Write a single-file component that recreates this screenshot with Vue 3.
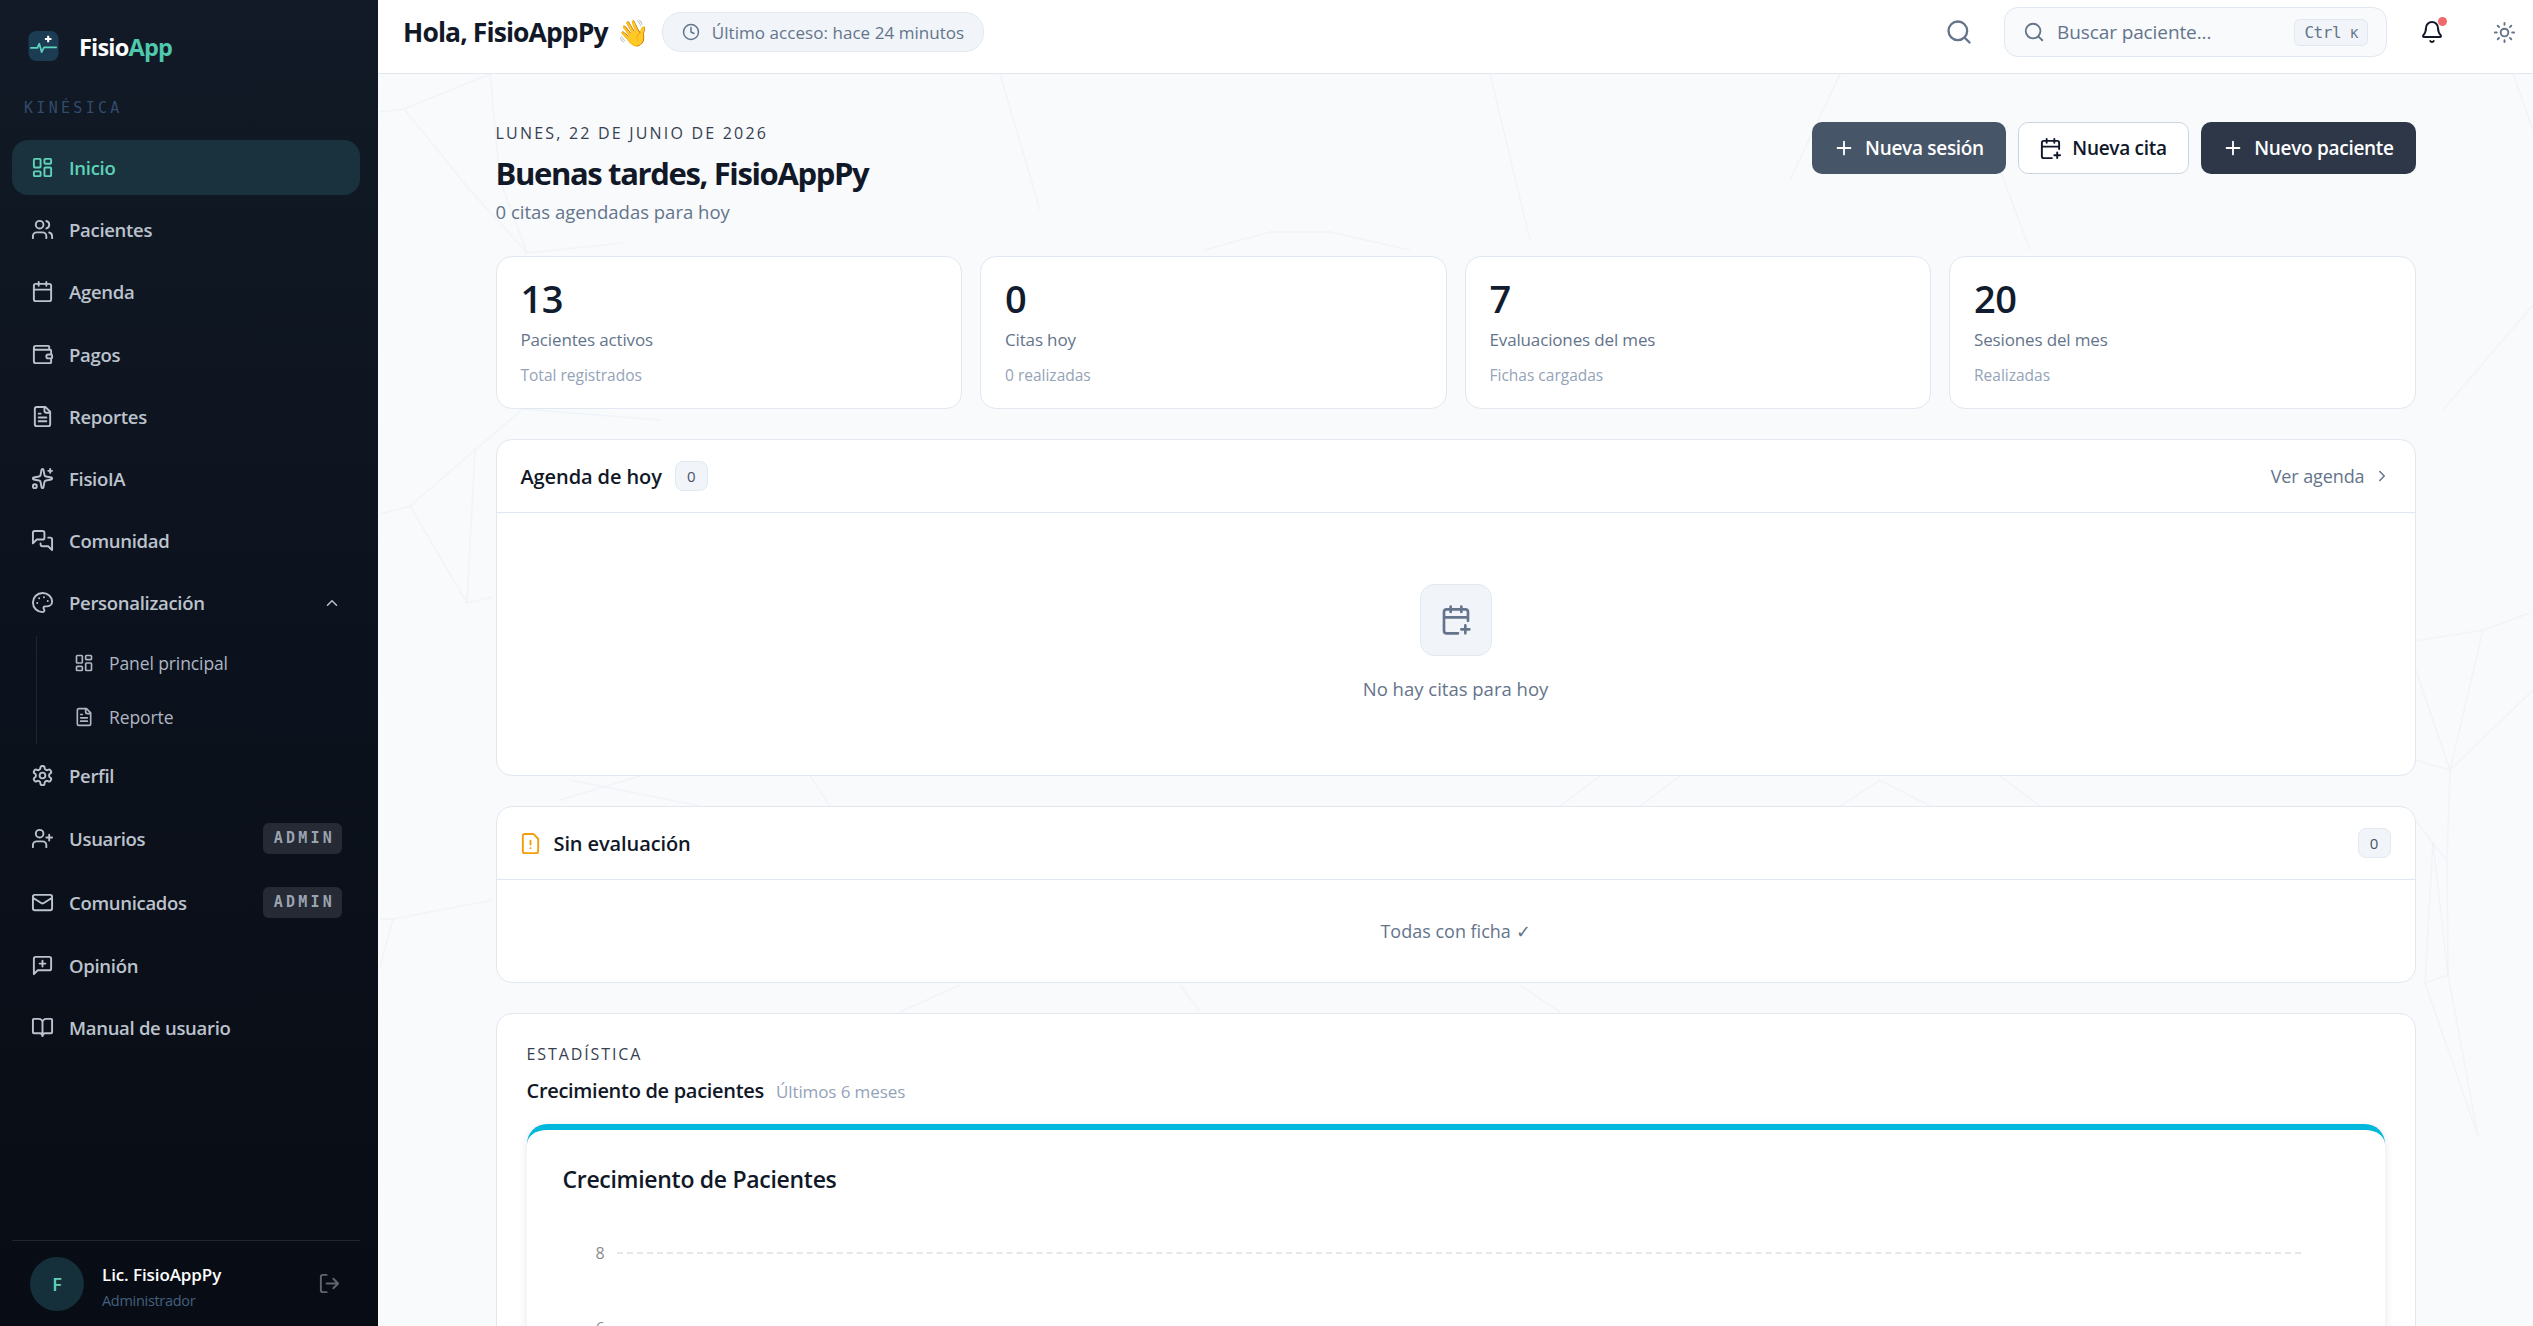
<template>
  <div class="app">
    <aside class="sidebar">
      <div class="brand">
        <svg class="logo" viewBox="0 0 32 32" fill="none">
          <rect width="32" height="32" rx="8" fill="#1b3c52" />
          <path d="M2.500 18h7l2-4.500 2.500 9 2.500-5h13" stroke="#5ed3bd" stroke-width="1.800" stroke-linecap="round" stroke-linejoin="round" />
          <path d="M21 5v7M17.500 8.500h7" stroke="#fff" stroke-width="2.200" />
        </svg>
        <span class="brand-name">Fisio<b>App</b></span>
      </div>
      <div class="section">KINÉSICA</div>

      <nav class="nav">
        <template v-for="item in navItems" :key="item.label">
          <a class="nav-item" :class="{ active: item.active, tall: item.badge }">
            <Icon :name="item.icon" :size="23" />
            <span class="nav-label">{{ item.label }}</span>
            <span v-if="item.badge" class="badge">{{ item.badge }}</span>
            <Icon v-if="item.children" class="chev" name="chevronUp" :size="18" />
          </a>
          <div v-if="item.children" class="subnav">
            <a v-for="sub in item.children" :key="sub.label" class="sub-item">
              <Icon :name="sub.icon" :size="20" />
              <span>{{ sub.label }}</span>
            </a>
          </div>
        </template>
      </nav>

      <div class="user">
        <div class="avatar">F</div>
        <div class="user-info">
          <div class="user-name">Lic. FisioAppPy</div>
          <div class="user-role">Administrador</div>
        </div>
        <Icon class="logout" name="logout" :size="23" />
      </div>
    </aside>

    <div class="main">
      <svg class="mesh" viewBox="378 70 2155 1256" fill="none">
        <polyline v-for="(line, i) in meshLines" :key="i" :points="line" stroke="#e2e8f0" stroke-opacity="0.3" stroke-width="1.500" />
      </svg>

      <header class="topbar">
        <h2 class="hello">Hola, FisioAppPy <span class="wave">👋</span></h2>
        <div class="last-access">
          <Icon name="clock" :size="18" />
          <span>Último acceso: hace 24 minutos</span>
        </div>
        <div class="spacer"></div>
        <Icon class="top-search" name="search" :size="28" />
        <div class="search-box">
          <Icon name="search" :size="22" />
          <span class="search-text">Buscar paciente...</span>
          <span class="kbd">Ctrl <small>K</small></span>
        </div>
        <div class="bell">
          <Icon name="bell" :size="24" />
          <span class="dot"></span>
        </div>
        <Icon class="sun" name="sun" :size="23" />
      </header>

      <main class="content">
        <div class="page-head">
          <div>
            <div class="date">LUNES, 22 DE JUNIO DE 2026</div>
            <h1 class="greeting">Buenas tardes, FisioAppPy</h1>
            <div class="subtitle">0 citas agendadas para hoy</div>
          </div>
          <div class="actions">
            <button class="btn slate"><Icon name="plus" :size="22" />Nueva sesión</button>
            <button class="btn outline"><Icon name="calendarPlus" :size="23" />Nueva cita</button>
            <button class="btn dark"><Icon name="plus" :size="22" />Nuevo paciente</button>
          </div>
        </div>

        <div class="stats">
          <div v-for="stat in stats" :key="stat.label" class="stat">
            <div class="stat-value">{{ stat.value }}</div>
            <div class="stat-label">{{ stat.label }}</div>
            <div class="stat-sub">{{ stat.sub }}</div>
          </div>
        </div>

        <section class="card">
          <div class="card-head">
            <span class="card-title">Agenda de hoy</span>
            <span class="count">0</span>
            <span class="spacer"></span>
            <a class="link">Ver agenda <Icon name="chevronRight" :size="18" /></a>
          </div>
          <div class="empty">
            <div class="empty-icon"><Icon name="calendarPlus" :size="32" /></div>
            <div>No hay citas para hoy</div>
          </div>
        </section>

        <section class="card">
          <div class="card-head">
            <Icon class="warn" name="fileWarning" :size="23" />
            <span class="card-title">Sin evaluación</span>
            <span class="spacer"></span>
            <span class="count">0</span>
          </div>
          <div class="all-ok">Todas con ficha ✓</div>
        </section>

        <section class="card stats-card">
          <div class="eyebrow">ESTADÍSTICA</div>
          <div class="chart-heading">
            <span>Crecimiento de pacientes</span>
            <small>Últimos 6 meses</small>
          </div>
          <div class="chart-card">
            <h3>Crecimiento de Pacientes</h3>
            <div class="chart">
              <div v-for="tick in [8, 6]" :key="tick" class="tick">
                <span>{{ tick }}</span>
                <i></i>
              </div>
            </div>
          </div>
        </section>
      </main>
    </div>
  </div>
</template>

<script setup>
import { h } from 'vue'

const dash = 'M4 3h5a1 1 0 0 1 1 1v7a1 1 0 0 1-1 1H4a1 1 0 0 1-1-1V4a1 1 0 0 1 1-1zM15 3h5a1 1 0 0 1 1 1v3a1 1 0 0 1-1 1h-5a1 1 0 0 1-1-1V4a1 1 0 0 1 1-1zM15 12h5a1 1 0 0 1 1 1v7a1 1 0 0 1-1 1h-5a1 1 0 0 1-1-1v-7a1 1 0 0 1 1-1zM4 16h5a1 1 0 0 1 1 1v3a1 1 0 0 1-1 1H4a1 1 0 0 1-1-1v-3a1 1 0 0 1 1-1z'
const fileText = 'M15 2H6a2 2 0 0 0-2 2v16a2 2 0 0 0 2 2h12a2 2 0 0 0 2-2V7ZM14 2v4a2 2 0 0 0 2 2h4M10 9H8M16 13H8M16 17H8'

const icons = {
  dash,
  fileText,
  users: 'M16 21v-2a4 4 0 0 0-4-4H6a4 4 0 0 0-4 4v2M5 7a4 4 0 1 0 8 0a4 4 0 1 0-8 0M22 21v-2a4 4 0 0 0-3-3.870M16 3.130a4 4 0 0 1 0 7.750',
  calendar: 'M8 2v4M16 2v4M5 4h14a2 2 0 0 1 2 2v14a2 2 0 0 1-2 2H5a2 2 0 0 1-2-2V6a2 2 0 0 1 2-2zM3 10h18',
  wallet: 'M19 7V4a1 1 0 0 0-1-1H5a2 2 0 0 0 0 4h15a1 1 0 0 1 1 1v4h-3a2 2 0 0 0 0 4h3a1 1 0 0 0 1-1v-2a1 1 0 0 0-1-1M3 5v14a2 2 0 0 0 2 2h15a1 1 0 0 0 1-1v-4',
  sparkles: 'M11.017 2.814a1 1 0 0 1 1.966 0l1.051 5.558a2 2 0 0 0 1.594 1.594l5.558 1.051a1 1 0 0 1 0 1.966l-5.558 1.051a2 2 0 0 0-1.594 1.594l-1.051 5.558a1 1 0 0 1-1.966 0l-1.051-5.558a2 2 0 0 0-1.594-1.594l-5.558-1.051a1 1 0 0 1 0-1.966l5.558-1.051a2 2 0 0 0 1.594-1.594zM20 2v4M22 4h-4M2 20a2 2 0 1 0 4 0a2 2 0 1 0-4 0',
  messages: 'M14 9a2 2 0 0 1-2 2H6l-4 4V4a2 2 0 0 1 2-2h8a2 2 0 0 1 2 2zM18 9h2a2 2 0 0 1 2 2v11l-4-4h-6a2 2 0 0 1-2-2v-1',
  palette: 'M12 22a1 1 0 0 1 0-20 10 9 0 0 1 10 9 5 5 0 0 1-5 5h-2.250a1.750 1.750 0 0 0-1.400 2.800l.3.4a1.750 1.750 0 0 1-1.400 2.800zM13.500 6.500h.01M17.500 10.500h.01M6.500 12.500h.01M8.500 7.500h.01',
  settings: 'M12.220 2h-.44a2 2 0 0 0-2 2v.18a2 2 0 0 1-1 1.730l-.43.25a2 2 0 0 1-2 0l-.15-.08a2 2 0 0 0-2.730.73l-.22.38a2 2 0 0 0 .73 2.730l.15.1a2 2 0 0 1 1 1.720v.51a2 2 0 0 1-1 1.740l-.15.09a2 2 0 0 0-.73 2.730l.22.38a2 2 0 0 0 2.730.73l.15-.08a2 2 0 0 1 2 0l.43.25a2 2 0 0 1 1 1.730V20a2 2 0 0 0 2 2h.44a2 2 0 0 0 2-2v-.18a2 2 0 0 1 1-1.730l.43-.25a2 2 0 0 1 2 0l.15.08a2 2 0 0 0 2.730-.73l.22-.39a2 2 0 0 0-.73-2.730l-.15-.08a2 2 0 0 1-1-1.740v-.5a2 2 0 0 1 1-1.740l.15-.09a2 2 0 0 0 .73-2.730l-.22-.38a2 2 0 0 0-2.730-.73l-.15.08a2 2 0 0 1-2 0l-.43-.25a2 2 0 0 1-1-1.730V4a2 2 0 0 0-2-2zM9 12a3 3 0 1 0 6 0a3 3 0 1 0-6 0',
  userPlus: 'M16 21v-2a4 4 0 0 0-4-4H6a4 4 0 0 0-4 4v2M5 7a4 4 0 1 0 8 0a4 4 0 1 0-8 0M19 8v6M22 11h-6',
  mail: 'm22 7-8.991 5.727a2 2 0 0 1-2.009 0L2 7M4 4h16a2 2 0 0 1 2 2v12a2 2 0 0 1-2 2H4a2 2 0 0 1-2-2V6a2 2 0 0 1 2-2z',
  messagePlus: 'M21 15a2 2 0 0 1-2 2H7l-4 4V5a2 2 0 0 1 2-2h14a2 2 0 0 1 2 2zM12 7v6M9 10h6',
  book: 'M12 7v14M3 18a1 1 0 0 1-1-1V4a1 1 0 0 1 1-1h5a4 4 0 0 1 4 4 4 4 0 0 1 4-4h5a1 1 0 0 1 1 1v13a1 1 0 0 1-1 1h-6a3 3 0 0 0-3 3 3 3 0 0 0-3-3z',
  chevronUp: 'm18 15-6-6-6 6',
  chevronRight: 'm9 18 6-6-6-6',
  logout: 'M9 21H5a2 2 0 0 1-2-2V5a2 2 0 0 1 2-2h4M16 17l5-5-5-5M21 12H9',
  clock: 'M2 12a10 10 0 1 0 20 0a10 10 0 1 0-20 0M12 6v6l4 2',
  search: 'M3 11a8 8 0 1 0 16 0a8 8 0 1 0-16 0M21 21l-4.300-4.300',
  bell: 'M10.268 21a2 2 0 0 0 3.464 0M3.262 15.326A1 1 0 0 0 4 17h16a1 1 0 0 0 .74-1.673C19.410 13.956 18 12.499 18 8A6 6 0 0 0 6 8c0 4.499-1.411 5.956-2.738 7.326',
  sun: 'M8 12a4 4 0 1 0 8 0a4 4 0 1 0-8 0M12 2v2M12 20v2M4.930 4.930l1.410 1.410M17.660 17.660l1.410 1.410M2 12h2M20 12h2M6.340 17.660l-1.410 1.410M19.070 4.930l-1.410 1.410',
  plus: 'M5 12h14M12 5v14',
  calendarPlus: 'M16 19h6M16 2v4M19 16v6M21 12.598V6a2 2 0 0 0-2-2H5a2 2 0 0 0-2 2v14a2 2 0 0 0 2 2h8.500M3 10h18M8 2v4',
  fileWarning: 'M15 2H6a2 2 0 0 0-2 2v16a2 2 0 0 0 2 2h12a2 2 0 0 0 2-2V7ZM12 9v4M12 17h.01'
}

const Icon = (props) =>
  h('svg', {
    width: props.size,
    height: props.size,
    viewBox: '0 0 24 24',
    fill: 'none',
    stroke: 'currentColor',
    'stroke-width': 2,
    'stroke-linecap': 'round',
    'stroke-linejoin': 'round',
    style: { flex: 'none' }
  }, [h('path', { d: icons[props.name] })])
Icon.props = ['name', 'size']

const navItems = [
  { label: 'Inicio', icon: 'dash', active: true },
  { label: 'Pacientes', icon: 'users' },
  { label: 'Agenda', icon: 'calendar' },
  { label: 'Pagos', icon: 'wallet' },
  { label: 'Reportes', icon: 'fileText' },
  { label: 'FisioIA', icon: 'sparkles' },
  { label: 'Comunidad', icon: 'messages' },
  {
    label: 'Personalización',
    icon: 'palette',
    children: [
      { label: 'Panel principal', icon: 'dash' },
      { label: 'Reporte', icon: 'fileText' }
    ]
  },
  { label: 'Perfil', icon: 'settings' },
  { label: 'Usuarios', icon: 'userPlus', badge: 'ADMIN' },
  { label: 'Comunicados', icon: 'mail', badge: 'ADMIN' },
  { label: 'Opinión', icon: 'messagePlus' },
  { label: 'Manual de usuario', icon: 'book' }
]

const stats = [
  { value: 13, label: 'Pacientes activos', sub: 'Total registrados' },
  { value: 0, label: 'Citas hoy', sub: '0 realizadas' },
  { value: 7, label: 'Evaluaciones del mes', sub: 'Fichas cargadas' },
  { value: 20, label: 'Sesiones del mes', sub: 'Realizadas' }
]

// faint network drawn behind the page, in page coordinates
const meshLines = [
  '380,112 404,109 490,74',
  '404,109 470,190 527,253 623,243',
  '490,74 500,180 527,253',
  '380,514 410,506 475,450 523,409 660,420',
  '410,506 467,603 493,597',
  '475,450 467,603',
  '380,919 393,919 493,900',
  '380,967 393,919',
  '1000,74 1040,210',
  '1204,250 1270,232 1330,232 1410,250',
  '1490,74 1530,240',
  '1840,74 1790,180',
  '2000,170 2030,250',
  '560,800 640,776',
  '570,780 700,806',
  '810,776 830,806',
  '1560,806 1600,776',
  '1680,776 1640,806',
  '1840,806 1880,780 1930,806',
  '2000,776 2040,806',
  '900,1012 960,985',
  '1180,985 1200,1012',
  '1520,985 1560,1012',
  '2513,74 2533,130',
  '2443,410 2533,305',
  '2415,641 2483,630 2530,613',
  '2483,630 2450,770 2415,668',
  '2450,770 2533,690',
  '2450,770 2447,861 2433,843 2415,820',
  '2433,843 2425,983 2448,975 2447,861',
  '2433,843 2448,975',
  '2425,983 2478,1136 2448,975',
  '2415,760 2450,770'
]
</script>

<style>
html, body {
  margin: 0;
  overflow: hidden;
}
</style>

<style scoped>
.app {
  display: flex;
  height: 100vh;
  font-family: "Open Sans", "Noto Sans", sans-serif;
  color: #0f172a;
  overflow: hidden;
}

.sidebar {
  width: 378px;
  flex: none;
  display: flex;
  flex-direction: column;
  padding: 0 18px 0 12px;
  box-sizing: border-box;
  background: linear-gradient(180deg, #111a26 0%, #0c121d 50%, #080c14 100%);
}
.brand {
  display: flex;
  align-items: center;
  gap: 20px;
  height: 100px;
  padding-left: 16px;
  padding-bottom: 6px;
  box-sizing: border-box;
  flex: none;
}
.logo {
  width: 31px;
  height: 30px;
  margin-top: -3px;
}
.brand-name {
  color: #fff;
  font-size: 23.500px;
  font-weight: 700;
  letter-spacing: -0.8px;
}
.brand-name b {
  color: #4fc9ae;
  font-weight: 700;
}
.section {
  font-family: "DejaVu Sans Mono", monospace;
  font-size: 15px;
  letter-spacing: 3.300px;
  color: #324b6b;
  padding-left: 12px;
  height: 40px;
  line-height: 16px;
  flex: none;
}
.nav {
  display: flex;
  flex-direction: column;
  gap: 7.200px;
  flex: 1;
}
.nav-item {
  display: flex;
  align-items: center;
  gap: 15px;
  height: 55px;
  padding: 0 18px 0 19px;
  border-radius: 16px;
  color: #bcc3cd;
  font-size: 18.500px;
  font-weight: 600;
  letter-spacing: -0.3px;
}
.nav-item.tall {
  height: 57px;
}
.nav-item.active {
  background: #1a323d;
  color: #5fd2b9;
}
.nav-label {
  flex: 1;
}
.chev {
  margin-right: 1px;
}
.badge {
  background: #252a35;
  color: #9aa3b0;
  font-family: "DejaVu Sans Mono", monospace;
  font-size: 15px;
  font-weight: 700;
  letter-spacing: 3.200px;
  padding: 0 7px 0 11px;
  line-height: 31px;
  border-radius: 6px;
}
.subnav {
  display: flex;
  flex-direction: column;
  margin: -2px 0 -3px 24px;
  padding-left: 37px;
  border-left: 1px solid #1e2530;
}
.sub-item {
  display: flex;
  align-items: center;
  gap: 15px;
  height: 54px;
  color: #aeb6c2;
  font-size: 17.500px;
  letter-spacing: -0.1px;
}
.user {
  display: flex;
  align-items: center;
  gap: 18px;
  height: 85px;
  padding: 0 19px 0 18px;
  border-top: 1px solid #20252e;
  flex: none;
}
.avatar {
  width: 54px;
  height: 54px;
  border-radius: 50%;
  background: #15303a;
  color: #62d2ba;
  display: flex;
  align-items: center;
  justify-content: center;
  font-size: 18px;
  font-weight: 600;
  flex: none;
}
.user-info {
  flex: 1;
  padding-top: 6px;
}
.user-name {
  color: #fff;
  font-size: 17px;
  font-weight: 600;
  letter-spacing: -0.1px;
}
.user-role {
  color: #44607f;
  font-size: 14.500px;
  letter-spacing: -0.3px;
  margin-top: 5px;
}
.logout {
  color: #5f6670;
}

.main {
  flex: 1;
  min-width: 0;
  position: relative;
  background: #f8fafc;
}
.mesh {
  position: absolute;
  left: 0;
  top: 70px;
  width: 2155px;
  height: 1256px;
}
.topbar {
  position: relative;
  display: flex;
  align-items: center;
  height: 74px;
  box-sizing: border-box;
  padding: 0 17px 9px 25px;
  background: #fff;
  border-bottom: 1px solid #e2e8f0;
}
.hello {
  margin: 0;
  font-size: 26.500px;
  font-weight: 700;
  letter-spacing: -0.9px;
  color: #111827;
}
.wave {
  font-size: 26px;
  margin-left: 3px;
}
.last-access {
  display: flex;
  align-items: center;
  gap: 12px;
  height: 38px;
  margin-left: 14px;
  padding: 0 19px;
  border: 1px solid #e2e8f0;
  border-radius: 19px;
  background: #f1f5f9;
  color: #64748b;
  font-size: 17px;
  letter-spacing: 0.05px;
}
.spacer {
  flex: 1;
}
.top-search {
  color: #64748b;
  margin-right: 31px;
}
.search-box {
  display: flex;
  align-items: center;
  gap: 12px;
  width: 383px;
  height: 50px;
  box-sizing: border-box;
  padding: 0 18px;
  border: 1px solid #e2e8f0;
  border-radius: 14px;
  background: #f8fafc;
  color: #64748b;
}
.search-text {
  flex: 1;
  font-size: 19px;
  letter-spacing: -0.1px;
}
.kbd {
  font-family: "DejaVu Sans Mono", monospace;
  font-size: 16px;
  padding: 3px 9px;
  border: 1px solid #e2e8f0;
  border-radius: 6px;
  background: #f1f5f9;
  letter-spacing: -0.4px;
}
.kbd small {
  font-size: 13px;
}
.bell {
  position: relative;
  margin-left: 33px;
  display: flex;
  color: #111827;
}
.dot {
  position: absolute;
  right: -3px;
  top: -3px;
  width: 9px;
  height: 9px;
  border-radius: 50%;
  background: #ef6b6b;
}
.sun {
  margin-left: 49px;
  color: #64748b;
}

.content {
  position: relative;
  max-width: 1920px;
  margin: 0 auto;
  padding-top: 48px;
  display: flex;
  flex-direction: column;
}
.page-head {
  display: flex;
  justify-content: space-between;
  align-items: flex-start;
  height: 134px;
}
.date {
  font-size: 16px;
  line-height: 22px;
  letter-spacing: 2.200px;
  font-weight: 500;
  color: #374151;
}
.greeting {
  margin: 7px 0 0;
  font-size: 31px;
  line-height: 44px;
  font-weight: 700;
  letter-spacing: -1.360px;
  color: #111827;
}
.subtitle {
  margin-top: 4px;
  font-size: 18.500px;
  line-height: 26px;
  color: #64748b;
}
.actions {
  display: flex;
  gap: 12px;
}
.btn {
  display: flex;
  align-items: center;
  justify-content: center;
  gap: 10px;
  height: 52px;
  box-sizing: border-box;
  border-radius: 10px;
  border: 1px solid transparent;
  font-family: inherit;
  font-size: 19px;
  font-weight: 600;
  letter-spacing: -0.3px;
  color: #fff;
}
.btn.slate {
  width: 194px;
  background: #475569;
}
.btn.outline {
  width: 171px;
  background: #fff;
  border-color: #cbd5e1;
  color: #0f172a;
}
.btn.dark {
  width: 215px;
  background: #2d3748;
}
.stats {
  display: grid;
  grid-template-columns: repeat(4, 1fr);
  gap: 18px;
  margin-bottom: 30px;
}
.stat {
  height: 153px;
  box-sizing: border-box;
  padding: 16px 24px 0;
  background: #fff;
  border: 1px solid #e2e8f0;
  border-radius: 16px;
}
.stat-value {
  font-size: 38px;
  line-height: 50px;
  font-weight: 600;
  letter-spacing: -0.5px;
  color: #111c2e;
}
.stat-label {
  font-size: 17px;
  line-height: 24px;
  margin-top: 5px;
  letter-spacing: -0.15px;
  color: #64748b;
}
.stat-sub {
  font-size: 15.500px;
  line-height: 22px;
  margin-top: 12px;
  color: #94a3b8;
}
.card {
  background: #fff;
  border: 1px solid #e2e8f0;
  border-radius: 16px;
  margin-bottom: 30px;
}
.card-head {
  display: flex;
  align-items: center;
  gap: 12px;
  height: 72px;
  padding: 0 24px;
  border-bottom: 1px solid #e2e8f0;
}
.card-title {
  font-size: 20px;
  font-weight: 600;
  letter-spacing: -0.1px;
  color: #111827;
}
.count {
  min-width: 33px;
  height: 30px;
  box-sizing: border-box;
  margin-left: 1px;
  display: flex;
  align-items: center;
  justify-content: center;
  background: #f1f5f9;
  border: 1px solid #e2e8f0;
  border-radius: 8px;
  font-size: 15px;
  font-weight: 500;
  color: #475569;
}
.link {
  display: flex;
  align-items: center;
  gap: 8px;
  font-size: 18px;
  letter-spacing: -0.1px;
  color: #64748b;
}
.warn {
  color: #f59e0b;
  margin-left: -2px;
}
.empty {
  height: 262px;
  display: flex;
  flex-direction: column;
  align-items: center;
  justify-content: center;
  gap: 20px;
  padding-bottom: 4px;
  box-sizing: border-box;
  font-size: 18.500px;
  color: #64748b;
}
.empty-icon {
  width: 72px;
  height: 72px;
  display: flex;
  align-items: center;
  justify-content: center;
  background: #f1f5f9;
  border: 1px solid #e2e8f0;
  border-radius: 14px;
  box-sizing: border-box;
}
.all-ok {
  height: 102px;
  display: flex;
  align-items: center;
  justify-content: center;
  font-size: 18px;
  color: #64748b;
}
.stats-card {
  padding: 29px 30px 0;
  margin-bottom: 0;
}
.eyebrow {
  font-size: 16px;
  line-height: 22px;
  font-weight: 500;
  letter-spacing: 1.900px;
  color: #374151;
}
.chart-heading {
  display: flex;
  align-items: baseline;
  gap: 12px;
  margin-top: 10px;
  line-height: 32px;
}
.chart-heading span {
  font-size: 20px;
  font-weight: 600;
  letter-spacing: -0.3px;
  color: #111827;
}
.chart-heading small {
  font-size: 17px;
  letter-spacing: -0.1px;
  color: #94a3b8;
}
.chart-card {
  margin-top: 16px;
  height: 400px;
  padding: 32px 36px;
  background: #fff;
  border-top: 6px solid #00b7dc;
  border-radius: 20px;
  box-shadow: 0 2px 10px rgba(15, 23, 42, 0.1);
  box-sizing: border-box;
}
.chart-card h3 {
  margin: 0;
  font-size: 23px;
  line-height: 34px;
  font-weight: 600;
  letter-spacing: -0.3px;
  color: #111827;
}
.chart {
  margin-top: 19px;
}
.tick {
  display: flex;
  align-items: center;
  height: 75px;
  margin-left: 33px;
  gap: 12px;
  font-size: 16px;
  color: #8c8c8c;
}
.tick i {
  flex: none;
  width: 1684px;
  border-top: 2px dashed #e5e7eb;
}
</style>
